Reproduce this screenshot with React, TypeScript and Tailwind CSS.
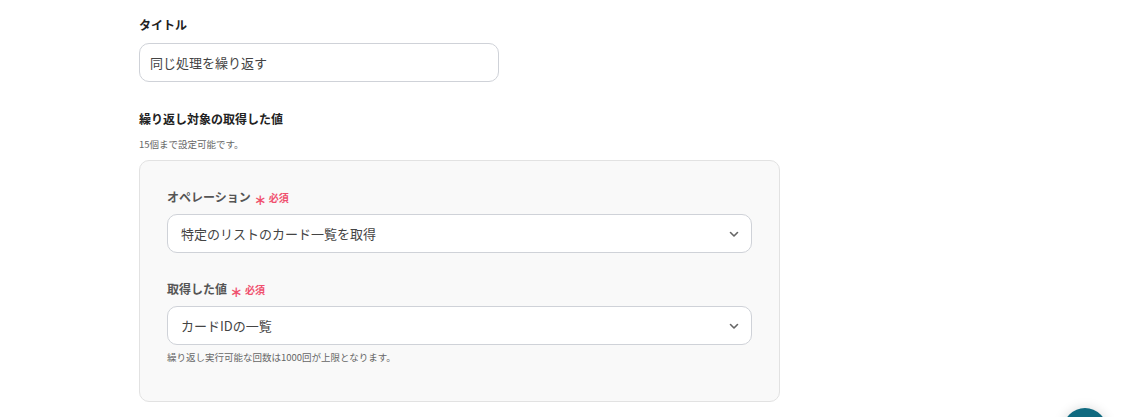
import React from "react";

function Chevron() {
  return (
    <svg width="12" height="12" viewBox="0 0 12 12" fill="none">
      <path d="M2.5 4.5L6 8L9.5 4.5" stroke="#666" strokeWidth="1.6" strokeLinecap="round" strokeLinejoin="round" />
    </svg>
  );
}

function Select({ value }: { value: string }) {
  return (
    <div className="flex h-[39px] w-[585px] items-center justify-between rounded-[10px] border border-[#cfd2d8] bg-white pl-[13px] pr-[11px] text-[13px] text-[#444]">
      <span>{value}</span>
      <Chevron />
    </div>
  );
}

function Label({ text }: { text: string }) {
  return (
    <div className="flex h-[17px] items-center text-[12px] font-semibold leading-[17px] text-[#555]">
      <span>{text}</span>
      <span className="relative top-[2px] ml-[3px] text-[15px] font-normal leading-[12px] text-[#f0506e]">∗</span>
      <span className="relative top-[1px] ml-[2px] text-[10px] leading-[17px] text-[#f0506e]">必須</span>
    </div>
  );
}

export default function App() {
  const font = { fontFamily: '"Noto Sans CJK JP", "Noto Sans", sans-serif' };
  return (
    <div className="relative h-[417px] w-[1124px] overflow-hidden bg-white" style={font}>
      <div className="pl-[139px] pt-[15px]">
        <div className="text-[12px] font-bold leading-[20px] text-[#222]">タイトル</div>
        <div className="mt-[8px] flex h-[39px] w-[360px] items-center rounded-[10px] border border-[#cfd2d8] pl-[10px] text-[13px] text-[#444]">
          同じ処理を繰り返す
        </div>
        <div className="mt-[27px] text-[12px] font-bold leading-[20px] text-[#222]">繰り返し対象の取得した値</div>
        <div className="mt-[8px] text-[9.5px] leading-[14px] text-[#666]">15個まで設定可能です。</div>
        <div className="mt-[9px] h-[242px] w-[641px] rounded-[10px] border border-[#e2e2e2] bg-[#f9f9f9] pl-[27px] pt-[27px]">
          <Label text="オペレーション" />
          <div className="mt-[9px]">
            <Select value="特定のリストのカード一覧を取得" />
          </div>
          <div className="mt-[27px]">
            <Label text="取得した値" />
          </div>
          <div className="mt-[9px]">
            <Select value="カードIDの一覧" />
          </div>
          <div className="mt-[5px] text-[9.5px] leading-[14px] text-[#666]">繰り返し実行可能な回数は1000回が上限となります。</div>
        </div>
      </div>
      <div className="absolute left-[1063px] top-[408px] h-[44px] w-[44px] rounded-full bg-[#0f6a80] shadow-[0_0_12px_rgba(0,0,0,0.15)]" />
    </div>
  );
}
